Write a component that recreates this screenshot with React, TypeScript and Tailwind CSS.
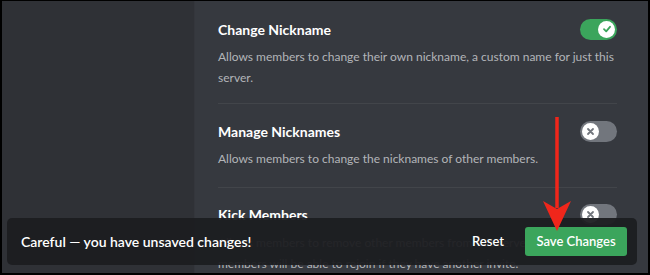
import React from "react";

function Toggle({ on }: { on: boolean }) {
  return (
    <div
      className={`flex h-[21px] w-[37px] shrink-0 items-center rounded-full px-[2px] ${
        on ? "justify-end bg-[#3ba55c]" : "justify-start bg-[#72767d]"
      }`}
    >
      <div className="flex h-[17px] w-[17px] items-center justify-center rounded-full bg-white">
        {on ? (
          <svg width="10" height="10" viewBox="0 0 10 10">
            <path d="M2 5.2 L4.2 7.3 L8 2.8" fill="none" stroke="#3ba55c" strokeWidth="1.8" strokeLinecap="round" strokeLinejoin="round" />
          </svg>
        ) : (
          <svg width="9" height="9" viewBox="0 0 9 9">
            <path d="M2 2 L7 7 M7 2 L2 7" fill="none" stroke="#72767d" strokeWidth="1.8" strokeLinecap="round" />
          </svg>
        )}
      </div>
    </div>
  );
}

function Permission({
  title,
  desc,
  on,
  descTop
}: {
  title: string;
  desc: string;
  on: boolean;
  descTop: string;
}) {
  return (
    <div>
      <div className="flex h-[22px] items-center justify-between">
        <span className="text-[14px] font-bold text-white">{title}</span>
        <Toggle on={on} />
      </div>
      <p className={`${descTop} text-[12px] leading-[21px] text-[#b3b5b9]`}>{desc}</p>
    </div>
  );
}

export default function App() {
  return (
    <div
      className="relative h-[275px] w-[650px] overflow-hidden bg-black pb-[2px] pl-[2px] pr-[2px] pt-[1px]"
      style={{ fontFamily: "Lato, 'Open Sans', sans-serif" }}
    >
      <div className="flex h-full">
        <aside className="w-[193px] shrink-0 border-r border-[#34363c] bg-[#2f3136]" />
        <main className="flex-1 bg-[#36393f] pl-[23px] pr-[31px] pt-[17px]">
          <Permission
            title="Change Nickname"
            desc="Allows members to change their own nickname, a custom name for just this server."
            on
            descTop="mt-[6px]"
          />
          <div className="mt-[15px] h-px bg-[#42454a]" />
          <div className="mt-[16px]">
            <Permission
              title="Manage Nicknames"
              desc="Allows members to change the nicknames of other members."
              on={false}
              descTop="mt-[6px]"
            />
          </div>
          <div className="mt-[18px] h-px bg-[#42454a]" />
          <div className="mt-[15px]">
            <Permission
              title="Kick Members"
              desc="Allows members to remove other members from this server. Kicked members will be able to rejoin if they have another invite."
              on={false}
              descTop="mt-[7px]"
            />
          </div>
        </main>
      </div>

      <div className="absolute left-[7px] top-[218px] flex h-[47px] w-[630px] items-center rounded-[5px] bg-[#1c1d21]/[0.95] pl-[14px] pr-[10px]">
        <span className="text-[14px] font-semibold text-white">Careful — you have unsaved changes!</span>
        <span className="ml-auto mr-[21px] text-[13px] font-semibold text-white">Reset</span>
        <button className="flex h-[29px] w-[102px] items-center justify-center rounded-[3px] bg-[#3ba55c] text-[13px] font-semibold text-white">
          Save Changes
        </button>
      </div>

      <svg className="absolute left-0 top-0" width="650" height="275" viewBox="0 0 650 275">
        <line x1="557" y1="117" x2="557" y2="208" stroke="#f0261b" strokeWidth="3.5" />
        <polygon points="543,201 557,209 571,201 557,231" fill="#f0261b" />
      </svg>
    </div>
  );
}
